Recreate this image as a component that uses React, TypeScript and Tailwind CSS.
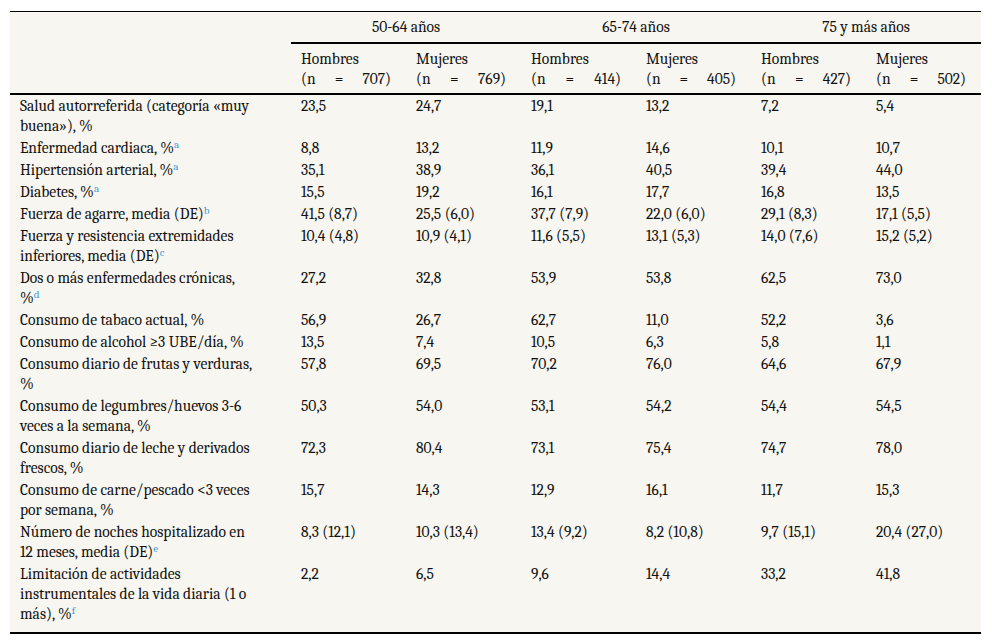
const groups = ["50-64 años", "65-74 años", "75 y más años"];

const subHeaders = [
  { sex: "Hombres", n: "707" },
  { sex: "Mujeres", n: "769" },
  { sex: "Hombres", n: "414" },
  { sex: "Mujeres", n: "405" },
  { sex: "Hombres", n: "427" },
  { sex: "Mujeres", n: "502" },
];

type Row = { label: string; note?: string; values: string[] };

const rows: Row[] = [
  { label: "Salud autorreferida (categoría «muy buena»), %", values: ["23,5", "24,7", "19,1", "13,2", "7,2", "5,4"] },
  { label: "Enfermedad cardiaca, %", note: "a", values: ["8,8", "13,2", "11,9", "14,6", "10,1", "10,7"] },
  { label: "Hipertensión arterial, %", note: "a", values: ["35,1", "38,9", "36,1", "40,5", "39,4", "44,0"] },
  { label: "Diabetes, %", note: "a", values: ["15,5", "19,2", "16,1", "17,7", "16,8", "13,5"] },
  { label: "Fuerza de agarre, media (DE)", note: "b", values: ["41,5 (8,7)", "25,5 (6,0)", "37,7 (7,9)", "22,0 (6,0)", "29,1 (8,3)", "17,1 (5,5)"] },
  { label: "Fuerza y resistencia extremidades inferiores, media (DE)", note: "c", values: ["10,4 (4,8)", "10,9 (4,1)", "11,6 (5,5)", "13,1 (5,3)", "14,0 (7,6)", "15,2 (5,2)"] },
  { label: "Dos o más enfermedades crónicas, %", note: "d", values: ["27,2", "32,8", "53,9", "53,8", "62,5", "73,0"] },
  { label: "Consumo de tabaco actual, %", values: ["56,9", "26,7", "62,7", "11,0", "52,2", "3,6"] },
  { label: "Consumo de alcohol ≥3 UBE/día, %", values: ["13,5", "7,4", "10,5", "6,3", "5,8", "1,1"] },
  { label: "Consumo diario de frutas y verduras, %", values: ["57,8", "69,5", "70,2", "76,0", "64,6", "67,9"] },
  { label: "Consumo de legumbres/huevos 3-6 veces a la semana, %", values: ["50,3", "54,0", "53,1", "54,2", "54,4", "54,5"] },
  { label: "Consumo diario de leche y derivados frescos, %", values: ["72,3", "80,4", "73,1", "75,4", "74,7", "78,0"] },
  { label: "Consumo de carne/pescado <3 veces por semana, %", values: ["15,7", "14,3", "12,9", "16,1", "11,7", "15,3"] },
  { label: "Número de noches hospitalizado en 12 meses, media (DE)", note: "e", values: ["8,3 (12,1)", "10,3 (13,4)", "13,4 (9,2)", "8,2 (10,8)", "9,7 (15,1)", "20,4 (27,0)"] },
  { label: "Limitación de actividades instrumentales de la vida diaria (1 o más), %", note: "f", values: ["2,2", "6,5", "9,6", "14,4", "33,2", "41,8"] },
];

export default function App() {
  return (
    <div className="min-h-screen bg-white pt-[11px] pl-[10px] font-serif">
      <table className="w-[971px] table-fixed border-collapse bg-[#f8f6f0] font-serif text-[15.5px] leading-[20px] text-[#111]">
        <colgroup>
          <col className="w-[281px]" />
          {subHeaders.map((_, i) => (
            <col key={i} className="w-[115px]" />
          ))}
        </colgroup>
        <thead>
          <tr>
            <th rowSpan={2} className="border-t border-b-2 border-black" />
            {groups.map((g) => (
              <th
                key={g}
                colSpan={2}
                className="border-t border-b-2 border-black pt-[5px] pb-[5px] text-center font-normal"
              >
                {g}
              </th>
            ))}
          </tr>
          <tr>
            {subHeaders.map((s, i) => (
              <th
                key={i}
                className="border-b-2 border-black pt-[5px] pb-[4px] pl-[10px] pr-[15px] text-left align-top font-normal"
              >
                <div>{s.sex}</div>
                <div className="flex justify-between">
                  <span>(n</span>
                  <span>=</span>
                  <span>{s.n})</span>
                </div>
              </th>
            ))}
          </tr>
        </thead>
        <tbody>
          {rows.map((r, ri) => {
            const last = ri === rows.length - 1;
            const cell = last
              ? "align-top pt-px pb-[8px] border-b-2 border-black"
              : "align-top py-px";
            return (
              <tr key={ri}>
                <td className={`${cell} pl-[10px] pr-[36px]`}>
                  {r.label}
                  {r.note && (
                    <sup className="text-[11px] text-[#3b9bd6]">{r.note}</sup>
                  )}
                </td>
                {r.values.map((v, vi) => (
                  <td key={vi} className={`${cell} pl-[10px] pr-[10px]`}>
                    {v}
                  </td>
                ))}
              </tr>
            );
          })}
        </tbody>
      </table>
    </div>
  );
}
